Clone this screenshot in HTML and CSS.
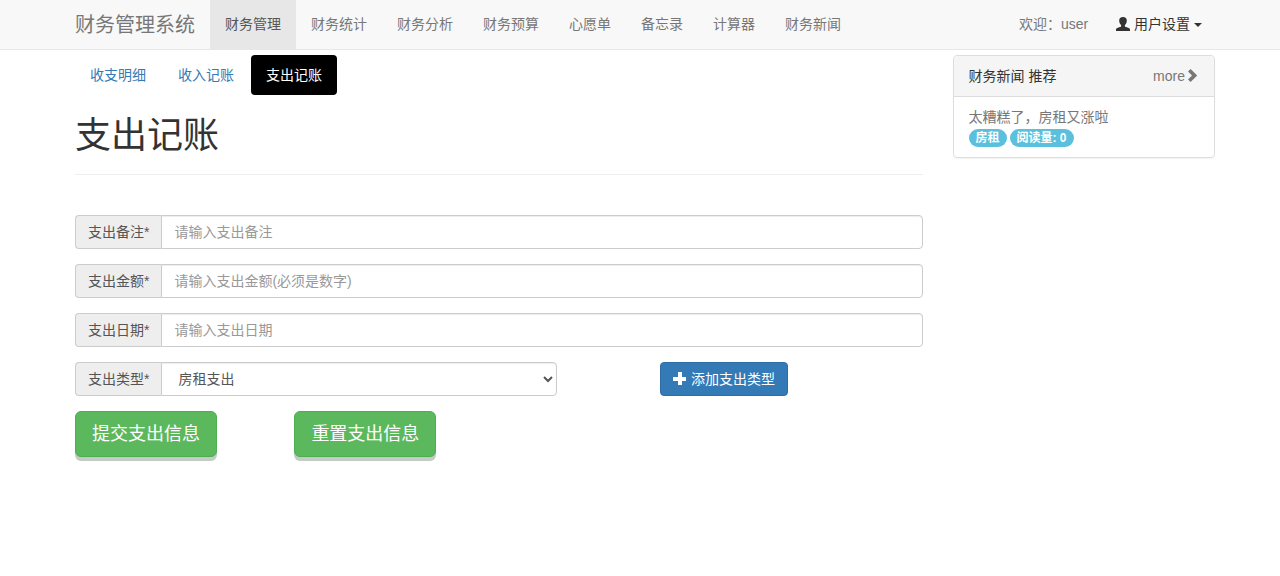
FILE: index.html
```html
<!DOCTYPE html>
<html lang="zh-CN">
<head>
    <meta charset="UTF-8">
    <meta name="viewport" content="width=device-width, initial-scale=1">
    <title>财务管理系统</title>
    <link rel="stylesheet" href="styles.css">
</head>
<body>
    <nav class="navbar">
        <div class="container navbar-inner">
            <a class="navbar-brand" href="#">财务管理系统</a>
            <ul class="navbar-nav">
                <li class="active"><a href="#">财务管理</a></li>
                <li><a href="#">财务统计</a></li>
                <li><a href="#">财务分析</a></li>
                <li><a href="#">财务预算</a></li>
                <li><a href="#">心愿单</a></li>
                <li><a href="#">备忘录</a></li>
                <li><a href="#">计算器</a></li>
                <li><a href="#">财务新闻</a></li>
            </ul>
            <div class="navbar-right">
                <a class="welcome" href="#">欢迎：user</a>
                <button type="button" class="user-menu">
                    <svg class="icon" viewBox="0 0 14 14" aria-hidden="true"><path d="M7 0C4.500 0 3.200 1.400 3.200 3.500c0 2 .8 3.700 1.900 4.600v.8c0 .6-.5.900-1.300 1.200L1.300 11C.4 11.400 0 11.800 0 12.500V14h14v-1.500c0-.7-.4-1.100-1.300-1.500l-2.500-.9c-.8-.3-1.300-.6-1.300-1.200v-.8c1.100-.9 1.900-2.600 1.900-4.600C10.800 1.400 9.500 0 7 0z"/></svg>
                    用户设置
                    <span class="caret"></span>
                </button>
            </div>
        </div>
    </nav>

    <div class="container grid">
        <main class="content">
            <ul class="nav-pills">
                <li><a href="#">收支明细</a></li>
                <li><a href="#">收入记账</a></li>
                <li class="active"><a href="#">支出记账</a></li>
            </ul>

            <div class="page-header">
                <h1>支出记账</h1>
            </div>

            <form>
                <div class="input-group">
                    <label for="remark">支出备注*</label>
                    <input type="text" id="remark" placeholder="请输入支出备注">
                </div>
                <div class="input-group">
                    <label for="amount">支出金额*</label>
                    <input type="text" id="amount" placeholder="请输入支出金额(必须是数字)">
                </div>
                <div class="input-group">
                    <label for="date">支出日期*</label>
                    <input type="text" id="date" placeholder="请输入支出日期">
                </div>
                <div class="grid">
                    <div class="input-group type-group">
                        <label for="type">支出类型*</label>
                        <select id="type">
                            <option>房租支出</option>
                        </select>
                    </div>
                    <div class="add-type">
                        <button type="button" class="btn btn-primary">
                            <svg class="icon" viewBox="0 0 14 14" aria-hidden="true"><path d="M5 0h4v5h4v4H9v4H5V9H0V5h5z"/></svg>
                            添加支出类型
                        </button>
                    </div>
                </div>
                <div class="grid">
                    <div class="form-action"><button type="submit" class="btn btn-success">提交支出信息</button></div>
                    <div class="form-action"><button type="reset" class="btn btn-success">重置支出信息</button></div>
                </div>
            </form>
        </main>

        <aside class="sidebar">
            <div class="panel">
                <div class="panel-heading">
                    <span>财务新闻 推荐</span>
                    <a href="#">more<svg class="icon" viewBox="0 0 14 14" aria-hidden="true"><path d="M3 2.600L5.600 0l6.600 6.500L5.600 13 3 10.400l4-3.900z"/></svg></a>
                </div>
                <div class="panel-body">
                    <a href="#">太糟糕了，房租又涨啦</a>
                    <div class="badges">
                        <span class="badge">房租</span>
                        <span class="badge">阅读量: 0</span>
                    </div>
                </div>
            </div>
        </aside>
    </div>
</body>
</html>
```
FILE: styles.css
```css
* {
    box-sizing: border-box;
}

body {
    margin: 0;
    padding-bottom: 20px;
    background: #fff;
    color: #333;
    font-family: "Liberation Sans", "Noto Sans CJK SC", sans-serif;
    font-size: 14px;
    line-height: 20px;
}

a {
    color: #337ab7;
    text-decoration: none;
}

ul {
    margin: 0;
    padding: 0;
    list-style: none;
}

button, input, select {
    font-family: inherit;
    font-size: inherit;
    line-height: inherit;
}

.container {
    max-width: 1150px;
    margin: 0 auto;
    padding-left: 10px;
}

.grid {
    display: grid;
    grid-template-columns: repeat(12, 1fr);
    column-gap: 30px;
}

.icon {
    width: 14px;
    height: 14px;
    fill: currentColor;
    vertical-align: -2px;
}

/* navbar */
.navbar {
    background: #f8f8f8;
    border-bottom: 1px solid #e7e7e7;
    margin-bottom: 5px;
}

.navbar-inner, .navbar-nav, .navbar-right, .nav-pills {
    display: flex;
}

.navbar-inner {
    min-height: 49px;
}

.navbar-brand {
    padding: 15px 15px 14px 0;
    color: #777;
    font-size: 20px;
}

.navbar-nav a, .welcome {
    display: block;
    padding: 14px 15px 15px;
    color: #777;
}

.navbar-nav .active a {
    background: #e7e7e7;
    color: #555;
}

.navbar-right {
    margin-left: auto;
}

.user-menu {
    padding: 0 13px 2px;
    border: 0;
    background: none;
    color: #333;
}

.caret {
    display: inline-block;
    border: 4px solid transparent;
    border-top-color: currentColor;
    border-bottom: 0;
    vertical-align: middle;
}

/* content */
.content {
    grid-column: span 9;
}

.nav-pills {
    gap: 2px;
}

.nav-pills a {
    display: block;
    padding: 10px 15px;
    border-radius: 4px;
}

.nav-pills .active a {
    background: #000;
    color: #fff;
}

.page-header {
    margin-bottom: 40px;
    padding: 21px 0 18px;
    border-bottom: 1px solid #eee;
}

h1 {
    margin: 0;
    font-size: 36px;
    font-weight: 400;
    line-height: 40px;
}

.input-group {
    display: flex;
    margin-bottom: 15px;
}

.input-group label {
    padding: 6px 12px;
    background: #eee;
    border: 1px solid #ccc;
    border-right: 0;
    border-radius: 4px 0 0 4px;
    color: #555;
}

.input-group input, .input-group select {
    flex: 1;
    min-width: 0;
    height: 34px;
    padding: 6px 12px;
    background: #fff;
    border: 1px solid #ccc;
    border-radius: 0 4px 4px 0;
    box-shadow: inset 0 1px 1px rgba(0, 0, 0, .075);
    color: #555;
}

.input-group select {
    padding-right: 0;
}

.input-group input::placeholder {
    color: #999;
}

.type-group {
    grid-column: span 7;
}

.add-type {
    grid-column: 9 / span 4;
}

.form-action {
    grid-column: span 3;
}

.btn {
    padding: 6px 12px;
    border: 1px solid;
    border-radius: 4px;
    color: #fff;
    white-space: nowrap;
    cursor: pointer;
}

.btn-primary {
    background: #337ab7;
    border-color: #2e6da4;
}

.btn-success {
    padding: 10px 16px;
    background: #5cb85c;
    border-color: #4cae4c;
    border-radius: 6px;
    box-shadow: 0 4px 0 #c4cbc4;
    font-size: 18px;
    line-height: 24px;
}

/* sidebar */
.sidebar {
    grid-column: span 3;
}

.panel {
    border: 1px solid #ddd;
    border-radius: 4px;
    box-shadow: 0 1px 1px rgba(0, 0, 0, .05);
}

.panel a {
    color: #777;
}

.panel-heading {
    display: flex;
    justify-content: space-between;
    padding: 10px 15px;
    background: #f5f5f5;
    border-bottom: 1px solid #ddd;
    border-radius: 3px 3px 0 0;
}

.panel-body {
    padding: 10px 15px;
}

.badges {
    display: flex;
    gap: 3px;
    padding: 2px 0 0;
}

.badge {
    padding: 0 7px;
    background: #5bc0de;
    border-radius: 10px;
    color: #fff;
    font-size: 12px;
    font-weight: 700;
    line-height: 18px;
}
```
